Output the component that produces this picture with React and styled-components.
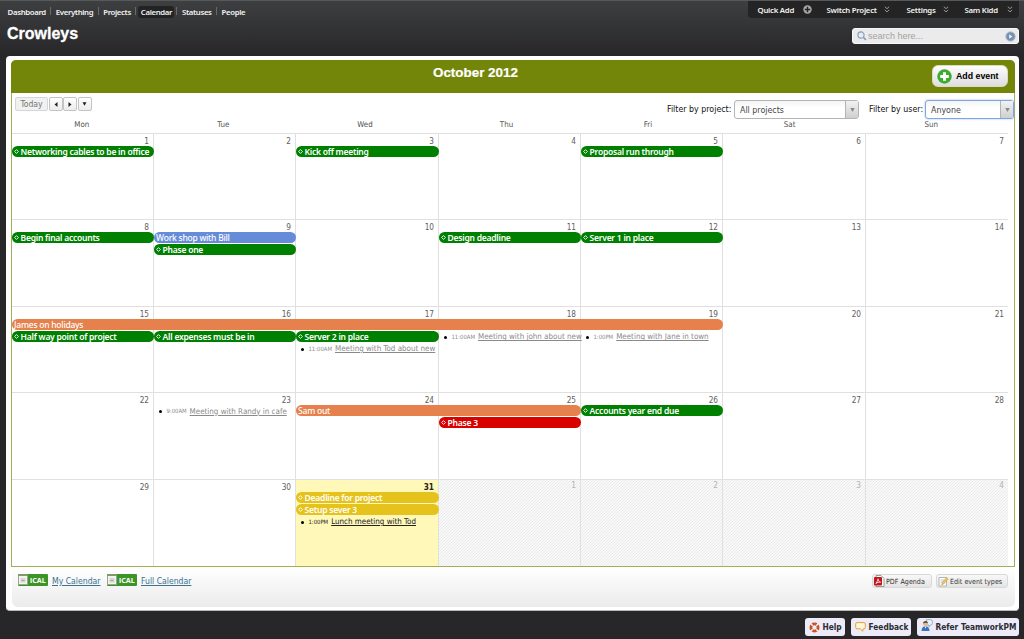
import React from 'react';
import styled, { createGlobalStyle } from 'styled-components';

const lucida = '"DejaVu Sans Condensed", "DejaVu Sans", "Noto Sans", sans-serif';
const noto = '"Noto Sans", "DejaVu Sans", sans-serif';
const arial = '"Liberation Sans", Arial, sans-serif';

const columns = '142px 142px 143px 142px 142px 143px 142px';
const days = ['Mon', 'Tue', 'Wed', 'Thu', 'Fri', 'Sat', 'Sun'];
const navItems = ['Dashboard', 'Everything', 'Projects', 'Calendar', 'Statuses', 'People'];

const weeks = [
  {
    height: 86,
    dates: [1, 2, 3, 4, 5, 6, 7],
    events: [
      { col: 1, slot: 1, milestone: true, color: 'green', text: 'Networking cables to be in office' },
      { col: 3, slot: 1, milestone: true, color: 'green', text: 'Kick off meeting' },
      { col: 5, slot: 1, milestone: true, color: 'green', text: 'Proposal run through' },
    ],
  },
  {
    height: 87,
    dates: [8, 9, 10, 11, 12, 13, 14],
    events: [
      { col: 1, slot: 1, milestone: true, color: 'green', text: 'Begin final accounts' },
      { col: 2, slot: 1, color: 'blue', text: 'Work shop with Bill' },
      { col: 2, slot: 2, milestone: true, color: 'green', text: 'Phase one' },
      { col: 4, slot: 1, milestone: true, color: 'green', text: 'Design deadline' },
      { col: 5, slot: 1, milestone: true, color: 'green', text: 'Server 1 in place' },
    ],
  },
  {
    height: 86,
    dates: [15, 16, 17, 18, 19, 20, 21],
    events: [
      { col: 1, span: 5, slot: 1, color: 'orange', text: 'James on holidays' },
      { col: 1, slot: 2, milestone: true, color: 'green', text: 'Half way point of project' },
      { col: 2, slot: 2, milestone: true, color: 'green', text: 'All expenses must be in' },
      { col: 3, slot: 2, milestone: true, color: 'green', text: 'Server 2 in place' },
      { col: 3, slot: 3, time: '11:00AM', text: 'Meeting with Tod about new' },
      { col: 4, slot: 2, time: '11:00AM', text: 'Meeting with john about new' },
      { col: 5, slot: 2, time: '1:00PM', text: 'Meeting with Jane in town' },
    ],
  },
  {
    height: 87,
    dates: [22, 23, 24, 25, 26, 27, 28],
    events: [
      { col: 2, slot: 1, time: '9:00AM', text: 'Meeting with Randy in cafe' },
      { col: 3, span: 2, slot: 1, color: 'orange', text: 'Sam out' },
      { col: 4, slot: 2, milestone: true, color: 'red', text: 'Phase 3' },
      { col: 5, slot: 1, milestone: true, color: 'green', text: 'Accounts year end due' },
    ],
  },
  {
    height: 87,
    dates: [29, 30, 31, 1, 2, 3, 4],
    today: 2,
    otherFrom: 3,
    events: [
      { col: 3, slot: 1, milestone: true, color: 'yellow', text: 'Deadline for project' },
      { col: 3, slot: 2, milestone: true, color: 'yellow', text: 'Setup sever 3' },
      { col: 3, slot: 3, time: '1:00PM', text: 'Lunch meeting with Tod', current: true },
    ],
  },
];

const barColors = {
  green: '#008000',
  blue: '#668cd9',
  orange: '#e6804d',
  red: '#d90000',
  yellow: '#e6c31c',
};

const Chevrons = () => (
  <svg width="6" height="7" viewBox="0 0 6 7" fill="none" stroke="#999" strokeWidth="1">
    <path d="M.8 .7 3 2.700 5.200 .7M.8 3.900 3 5.900 5.200 3.900" />
  </svg>
);

const IcalIcon = () => (
  <svg width="10" height="12" viewBox="0 0 10 12">
    <rect x=".5" y=".5" width="9" height="10" fill="#f3f3ee" stroke="#9ba596" />
    <rect x="0" y="0" width="10" height="2" fill="#7f9a68" />
    <rect x="2.5" y="4" width="5" height="4.500" fill="#d6d8d0" />
    <path d="M3.500 6.500h3" stroke="#999" strokeWidth=".8" />
  </svg>
);

function CalendarEvent({ event }) {
  if (event.time) {
    return (
      <TimedEvent $col={event.col} $slot={event.slot} $current={event.current}>
        <Bullet />
        <Time>{event.time}</Time>
        <EventLink>{event.text}</EventLink>
      </TimedEvent>
    );
  }
  return (
    <Bar $col={event.col} $span={event.span || 1} $slot={event.slot} $color={barColors[event.color]}>
      {event.milestone && (
        <svg width="5" height="5" viewBox="0 0 5 5" fill="none" stroke="#fff" strokeWidth=".9">
          <path d="M2.5 .6 4.4 2.5 2.5 4.4 .6 2.5Z" />
        </svg>
      )}
      <BarText $bold={event.milestone}>{event.text}</BarText>
    </Bar>
  );
}

function App() {
  return (
    <Page>
      <GlobalStyle />
      <Header>
        <HeaderLeft>
          <MainNav>
            {navItems.map((item) => (
              <NavCell key={item}>
                <NavItem $active={item === 'Calendar'}>{item}</NavItem>
              </NavCell>
            ))}
          </MainNav>
          <Company>Crowleys</Company>
        </HeaderLeft>
        <HeaderRight>
          <UserMenu>
            <MenuItem $width={69} $gap={15}>
              Quick Add
              <svg width="9" height="9" viewBox="0 0 9 9">
                <circle cx="4.5" cy="4.5" r="4.2" fill="#a9a9a9" />
                <path d="M4.5 1.8v5.4M1.8 4.5h5.4" stroke="#242425" strokeWidth="1.4" />
              </svg>
            </MenuItem>
            <MenuItem $width={80} $gap={17}>Switch Project <Chevrons /></MenuItem>
            <MenuItem $width={58} $gap={16}>Settings <Chevrons /></MenuItem>
            <MenuItem $width={54} $gap={6}>Sam Kidd <Chevrons /></MenuItem>
          </UserMenu>
          <Search>
            <svg width="10" height="10" viewBox="0 0 10 10" fill="none" stroke="#7f9dbb">
              <circle cx="4" cy="4" r="3.1" strokeWidth="1.1" />
              <path d="M6.4 6.4 9 9" strokeWidth="1.5" />
            </svg>
            <Placeholder>search here...</Placeholder>
            <svg width="11" height="11" viewBox="0 0 11 11">
              <circle cx="5.5" cy="5.5" r="4.6" fill="#7590b0" stroke="#a3b3c6" />
              <path d="M4.2 3.2 7.4 5.5 4.2 7.8Z" fill="#eef3f8" />
            </svg>
          </Search>
        </HeaderRight>
      </Header>

      <Panel>
        <Calendar>
          <TitleBar>
            <Month>October 2012</Month>
            <AddEvent>
              <svg width="15" height="15" viewBox="0 0 15 15">
                <circle cx="7.5" cy="7.5" r="7.2" fill="#3cab2f" />
                <path d="M7.5 3.2v8.6M3.2 7.5h8.6" stroke="#fff" strokeWidth="2.9" />
              </svg>
              Add event
            </AddEvent>
          </TitleBar>
          <Toolbar>
            <Pager>
              <Today>Today</Today>
              <PageButton>
                <svg width="4" height="5" viewBox="0 0 4 5"><path d="M3.500 0v5L.5 2.5Z" fill="#222" /></svg>
              </PageButton>
              <PageButton>
                <svg width="4" height="5" viewBox="0 0 4 5"><path d="M.5 0v5L3.500 2.5Z" fill="#222" /></svg>
              </PageButton>
              <PageButton>
                <svg width="5" height="4" viewBox="0 0 5 4"><path d="M.5 .2h4L2.5 3.800Z" fill="#222" /></svg>
              </PageButton>
            </Pager>
            <Filters>
              <FilterLabel $width={67}>Filter by project:</FilterLabel>
              <Select $width={125}>
                <span>All projects</span>
                <SelectArrow>
                  <svg width="5" height="4" viewBox="0 0 5 4"><path d="M.3 0h4.400L2.5 4Z" fill="#888" /></svg>
                </SelectArrow>
              </Select>
              <FilterLabel $width={56} $gap={10}>Filter by user:</FilterLabel>
              <Select $width={89} $focus>
                <span>Anyone</span>
                <SelectArrow>
                  <svg width="5" height="4" viewBox="0 0 5 4"><path d="M.3 0h4.400L2.5 4Z" fill="#888" /></svg>
                </SelectArrow>
              </Select>
            </Filters>
          </Toolbar>
          <DayNames>
            {days.map((day) => <span key={day}>{day}</span>)}
          </DayNames>
          {weeks.map((week, i) => (
            <Week key={i} $height={week.height}>
              {week.dates.map((date, d) => (
                <Day key={d} $col={d + 1} $today={week.today === d} $other={week.otherFrom <= d}>
                  {date}
                </Day>
              ))}
              {week.events.map((event) => <CalendarEvent key={event.text} event={event} />)}
            </Week>
          ))}
        </Calendar>

        <PanelFooter>
          <Feeds>
            <Ical><IcalIcon />iCAL</Ical>
            <FeedLink $width={55}>My Calendar</FeedLink>
            <Ical><IcalIcon />iCAL</Ical>
            <FeedLink>Full Calendar</FeedLink>
          </Feeds>
          <Actions>
            <SmallButton $width={60}>
              <svg width="12" height="12" viewBox="0 0 12 12">
                <path d="M3 .5h5l3 3v8H3Z" fill="#fff" stroke="#999" />
                <rect x="1" y="2" width="8" height="8.500" rx="1" fill="#c4151c" />
                <path d="M2.800 8.500C4.500 6.500 5 5 5 3.800c.2 2 1.200 3 2.600 3.400C6 7 4.300 7.300 2.800 8.500Z" fill="none" stroke="#fff" strokeWidth=".8" />
              </svg>
              PDF Agenda
            </SmallButton>
            <SmallButton $width={72}>
              <svg width="12" height="11" viewBox="0 0 12 11">
                <path d="M2 1.500h7.500v8.500H2Z" fill="#fff" stroke="#b3b3b3" />
                <path d="M3.500 4h4M3.500 6h3" stroke="#b9c6d6" />
                <path d="M4.500 8.800 5.300 6.500 9.600 1.500 11.200 3 6.700 8Z" fill="#f1c45b" stroke="#c99a42" strokeWidth=".6" />
              </svg>
              Edit event types
            </SmallButton>
          </Actions>
        </PanelFooter>
      </Panel>

      <BottomBar>
        <BottomButton $width={40}>
          <svg width="11" height="11" viewBox="0 0 11 11" fill="none">
            <circle cx="5.500" cy="5.500" r="3.600" stroke="#c4552a" strokeWidth="2.800" />
            <path d="M1.500 1.500 3.800 3.800M9.500 1.500 7.200 3.800M1.500 9.500 3.800 7.200M9.500 9.500 7.200 7.200" stroke="#fbeee2" strokeWidth="1.500" />
          </svg>
          Help
        </BottomButton>
        <BottomButton $width={60}>
          <svg width="11" height="10" viewBox="0 0 11 10">
            <path d="M2 .6h7q1.300 0 1.300 1.300v3.600q0 1.300-1.300 1.300H8.300L7.600 9.300 5.300 6.800H2Q.7 6.800.7 5.500V1.900Q.7.600 2 .600Z" fill="#fff6d8" stroke="#d9a441" />
          </svg>
          Feedback
        </BottomButton>
        <BottomButton $width={102}>
          <Referral width="12" height="13" viewBox="0 0 12 13">
            <path d="M5.500.6h4q1.900 0 1.900 1.900v1.800q0 1.700-1.900 1.700L8 8V6H5.500Z" fill="#e6f1fa" stroke="#7fa6c4" strokeWidth=".8" />
            <circle cx="4.500" cy="4.800" r="2.400" fill="#e7b98d" />
            <path d="M2 4.500Q2.200 1.800 4.600 1.900 7 2 7 4.200L4.500 3.700Z" fill="#59422f" />
            <path d="M.6 12Q.6 7.300 4.500 7.300T8.500 12Z" fill="#3d74b8" />
            <path d="M3.500 7.400h2L4.500 9.500Z" fill="#fff" />
          </Referral>
          Refer TeamworkPM
        </BottomButton>
      </BottomBar>
    </Page>
  );
}

export default App;

const GlobalStyle = createGlobalStyle`
  * {
    box-sizing: border-box;
  }

  body {
    margin: 0;
    background: #272729;
    overflow: hidden;
  }

  svg {
    display: block;
    flex: none;
  }
`;

const Page = styled.div`
  width: 1024px;
  height: 639px;
  font-family: ${lucida};
  font-size: 8px;
  white-space: nowrap;
  background: #272729 linear-gradient(#3e3f41, #272729) no-repeat 0 0 / 100% 56px;
`;

const Header = styled.div`
  height: 56px;
  display: flex;
  justify-content: space-between;
  border-top: 1px solid #56585a;
`;

const HeaderLeft = styled.div`
  padding: 5px 0 0 5px;
`;

const MainNav = styled.div`
  display: flex;
  height: 12px;
`;

const NavCell = styled.div`
  display: flex;

  & + &::before {
    content: '';
    width: 1px;
    height: 8px;
    margin: 1px 2px 0;
    background: #68696b;
  }
`;

const NavItem = styled.span`
  padding: 0 2.4px 0 2.6px;
  color: #f2f2f2;
  font-family: ${noto};
  font-weight: 600;
  font-size: 7.8px;
  letter-spacing: -0.36px;
  line-height: 12px;
  border-radius: 3px;
  background: ${(p) => (p.$active ? '#232324' : 'none')};
`;

const Company = styled.h1`
  margin: 6px 0 0 2px;
  color: #fff;
  font: bold 16px/20px ${arial};
  -webkit-text-stroke: 0.3px #fff;
`;

const HeaderRight = styled.div`
  display: flex;
  flex-direction: column;
  align-items: flex-end;
  padding-right: 5px;
`;

const UserMenu = styled.div`
  display: flex;
  width: 271px;
  height: 17px;
  padding-left: 9.5px;
  background: #242425;
  border-radius: 0 0 4px 4px;
`;

const MenuItem = styled.span`
  display: flex;
  align-items: center;
  justify-content: space-between;
  flex: none;
  width: ${(p) => p.$width}px;
  padding-right: ${(p) => p.$gap}px;
  color: #f2f2f2;
  font-family: ${noto};
  font-weight: 600;
  font-size: 7.8px;
  letter-spacing: -0.25px;
`;

const Search = styled.div`
  display: flex;
  align-items: center;
  gap: 1px;
  width: 167px;
  height: 16px;
  margin-top: 10px;
  padding: 0 2px 0 4px;
  background: #ebebeb;
  border: 1px solid #f8f8f8;
  border-radius: 3px;
`;

const Placeholder = styled.span`
  flex: 1;
  color: #a2a2a2;
  font: 9px/14px ${arial};
`;

const Panel = styled.div`
  width: 1013px;
  height: 555px;
  margin-left: 6px;
  padding: 4px 4px 4px 5px;
  background: #fff;
  border-radius: 4px;
  border-bottom: 1px solid #b9b9b9;
`;

const Calendar = styled.div`
  height: 507px;
  border: 1px solid #a3ae55;
  border-top: 0;
  border-radius: 5px 5px 0 0;
`;

const TitleBar = styled.div`
  display: flex;
  justify-content: flex-end;
  height: 33px;
  margin: 0 -1px;
  padding: 5px 7px 0 0;
  background: #73860a;
  border-radius: 5px 5px 0 0;
`;

const Month = styled.h2`
  flex: 1;
  margin: 0;
  padding-left: 422px;
  color: #fff;
  font: bold 13.4px/16px ${arial};
  -webkit-text-stroke: 0.2px #fff;
`;

const AddEvent = styled.button`
  display: flex;
  align-items: center;
  gap: 4.5px;
  width: 76px;
  height: 22px;
  padding: 0 3.5px;
  border: 1px solid #d8dcc0;
  border-radius: 6px;
  color: #000;
  font: bold 8.8px ${arial};
  white-space: nowrap;
  background: linear-gradient(#fdfdfd, #dedede);
`;

const Toolbar = styled.div`
  display: flex;
  justify-content: space-between;
  height: 25px;
`;

const Pager = styled.div`
  display: flex;
  padding: 4px 0 0 3px;
  gap: 0.5px;
`;

const Today = styled.div`
  width: 33px;
  height: 14px;
  border: 1px solid #d6d6d6;
  border-radius: 2px;
  background: #f1f1f1;
  color: #757575;
  font-size: 8.6px;
  line-height: 12px;
  text-align: center;
`;

const PageButton = styled.div`
  display: flex;
  align-items: center;
  justify-content: center;
  width: 14px;
  height: 14px;
  border: 1px solid #c4c4c4;
  border-radius: 2px;
  background: linear-gradient(#fff, #ececec);
`;

const Filters = styled.div`
  display: flex;
  padding-top: 7px;
`;

const FilterLabel = styled.span`
  width: ${(p) => p.$width}px;
  margin-left: ${(p) => p.$gap || 0}px;
  color: #111;
  font-size: 8.8px;
  line-height: 18px;
`;

const Select = styled.div`
  display: flex;
  justify-content: space-between;
  width: ${(p) => p.$width}px;
  height: 19px;
  padding-left: 5px;
  border: 1px solid ${(p) => (p.$focus ? '#7ea6dc' : '#b4b4b4')};
  box-shadow: ${(p) => (p.$focus ? '0 0 2px #8db3e6' : 'none')};
  border-radius: 3px;
  background: linear-gradient(#f4f4f4, #fff 40%);
  color: #444;
  font-size: 8.8px;
  line-height: 18px;
`;

const SelectArrow = styled.span`
  display: flex;
  align-items: center;
  justify-content: center;
  width: 13px;
  border-left: 1px solid #b4b4b4;
  background: linear-gradient(#f2f2f2, #cfcfcf);
`;

const DayNames = styled.div`
  display: grid;
  grid-template-columns: repeat(7, 1fr);
  width: 991px;
  height: 15px;
  margin-left: -1px;
  color: #555;
  font-size: 7.9px;
  line-height: 13px;
  text-align: center;
`;

const Week = styled.div`
  display: grid;
  grid-template-columns: ${columns};
  grid-template-rows: 12px 11.8px 11.8px 11.8px 1fr;
  width: 996px;
  height: ${(p) => p.$height}px;
  border-top: 1px solid #e0e0e0;
`;

const hatch = '#f7f8f7 linear-gradient(135deg, transparent 38%, #e9ece9 38% 62%, transparent 62%) 0 0 / 3px 3px';

const Day = styled.div`
  grid-row: 1 / -1;
  grid-column: ${(p) => p.$col};
  padding-right: 4px;
  border-right: ${(p) => (p.$col === 7 ? 0 : 1)}px solid #e0e0e0;
  background: ${(p) => (p.$today ? '#fff8b8' : p.$other ? hatch : 'none')};
  color: ${(p) => (p.$today ? '#222' : p.$other ? '#b3b3b3' : '#606060')};
  font-weight: ${(p) => (p.$today ? 'bold' : 'normal')};
  font-size: 8.2px;
  line-height: ${(p) => (p.$today ? 15 : p.$other ? 11 : 14)}px;
  text-align: right;
`;

const Bar = styled.div`
  grid-row: ${(p) => p.$slot + 1};
  grid-column: ${(p) => p.$col} / span ${(p) => p.$span};
  display: flex;
  align-items: center;
  gap: 1.5px;
  height: 11px;
  margin-left: -0.4px;
  padding-left: 2.5px;
  border-radius: 5.5px;
  background: ${(p) => p.$color};
  color: #fff;
  overflow: hidden;
`;

const BarText = styled.span`
  font-family: ${noto};
  font-size: 8.5px;
  font-weight: ${(p) => (p.$bold ? 600 : 500)};
  letter-spacing: -0.24px;
  line-height: 11px;
`;

const TimedEvent = styled.div`
  grid-row: ${(p) => p.$slot + 1};
  grid-column: ${(p) => p.$col};
  display: flex;
  align-items: center;
  height: 12px;
  padding-left: 5px;
  color: ${(p) => (p.$current ? '#222' : '#8a8a8a')};
`;

const Bullet = styled.i`
  flex: none;
  width: 3px;
  height: 3px;
  margin: 1px 4.5px 0 0;
  border-radius: 50%;
  background: #000;
`;

const Time = styled.span`
  margin-right: 3px;
  font-size: 5.9px;
`;

const EventLink = styled.span`
  font-size: 7.95px;
  text-decoration: underline;
`;

const PanelFooter = styled.div`
  display: flex;
  justify-content: space-between;
  height: 40px;
  margin-left: 1px;
  padding: 7px 7px 0 6px;
  background: linear-gradient(#fff, #ebebeb);
  border-radius: 0 0 6px 6px;
`;

const Feeds = styled.div`
  display: flex;
`;

const Ical = styled.span`
  display: flex;
  align-items: center;
  gap: 2px;
  width: 30px;
  height: 12px;
  margin-right: 4px;
  border-radius: 1px;
  background: #3c9426;
  color: #fff;
  font: bold 7.2px ${noto};
`;

const FeedLink = styled.span`
  width: ${(p) => (p.$width ? `${p.$width}px` : 'auto')};
  color: #3b7191;
  font-size: 8.6px;
  line-height: 14px;
  text-decoration: underline;
`;

const Actions = styled.div`
  display: flex;
  gap: 4px;
`;

const SmallButton = styled.div`
  display: flex;
  align-items: center;
  gap: 1px;
  width: ${(p) => p.$width}px;
  height: 14px;
  border: 1px solid #d9d9d9;
  border-radius: 3px;
  background: linear-gradient(#f8f8f8, #e4e4e4);
  color: #333;
  font-size: 7.1px;
`;

const BottomBar = styled.div`
  display: flex;
  justify-content: flex-end;
  gap: 6px;
  padding: 7px 5px 0 0;
`;

const BottomButton = styled.div`
  display: flex;
  align-items: center;
  gap: 2.5px;
  width: ${(p) => p.$width}px;
  height: 18px;
  padding-left: 4px;
  border-radius: 3px;
  background: #eeebf9;
  color: #2b2b33;
  font-size: 8.3px;
  font-weight: bold;
`;

const Referral = styled.svg`
  margin-bottom: 3px;
`;
